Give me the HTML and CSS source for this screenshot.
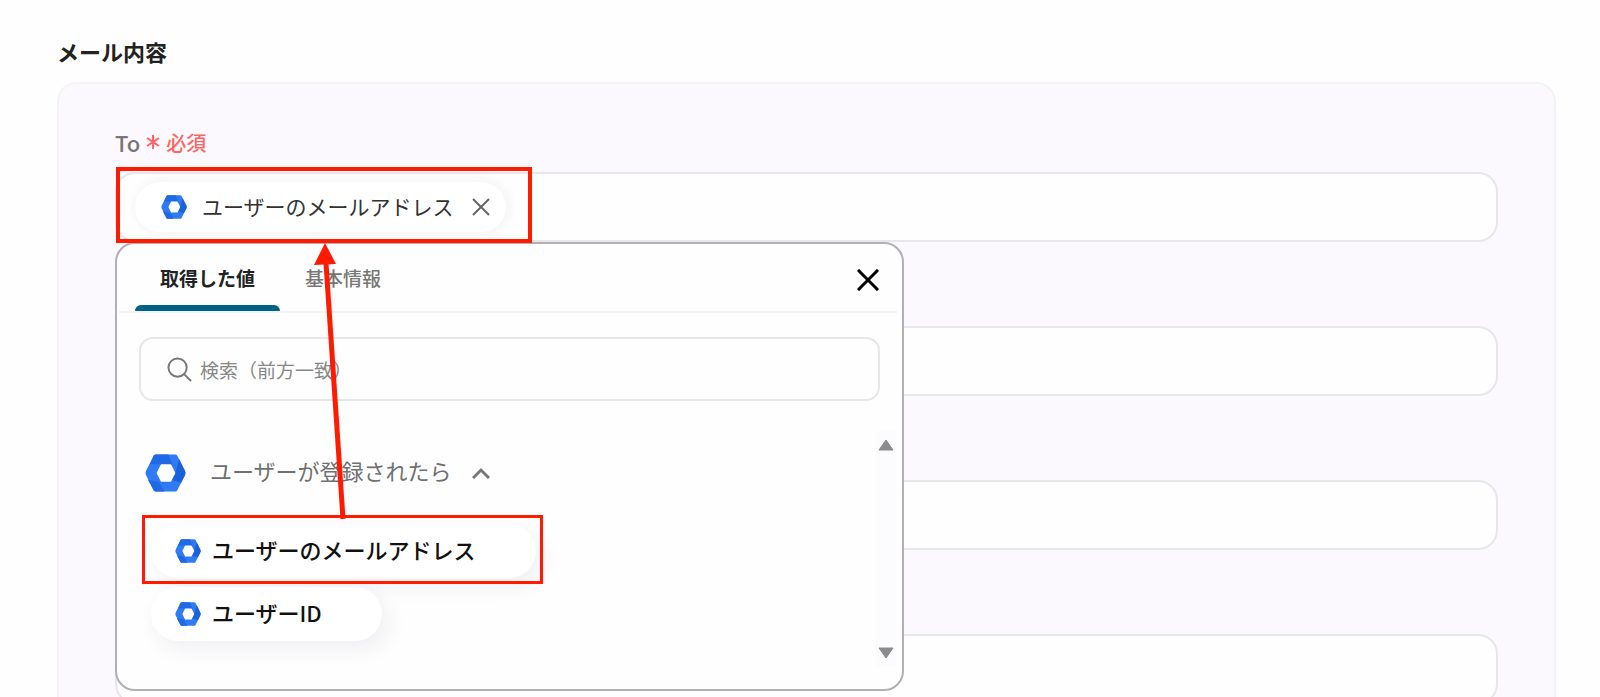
FILE: index.html
```html
<!DOCTYPE html>
<html lang="ja">
<head>
    <meta charset="UTF-8">
    <meta name="viewport" content="width=device-width, initial-scale=1.0">
    <title>メール内容</title>
    <link rel="stylesheet" href="styles.css">
</head>
<body>
    <!-- 共通アイコン -->
    <svg class="defs" width="0" height="0" aria-hidden="true">
        <symbol id="hex" viewBox="0 0 42 38">
            <path fill="#2f7bf6" d="M11 0h20q1 0 2 1l8 16q1 2 0 4l-8 16q-1 1-2 1H11q-1 0-2-1L1 21q-1-2 0-4L9 1q1-1 2-1z"/>
            <path fill="#2068e4" d="M11 0h13l4 10H5l4-9q1-1 2-1z"/>
            <path fill="#1a62dc" d="M35 5l6 12q1 2 0 4l-4 8-10-3 4-7z"/>
            <path fill="#1f69e6" d="M3 26l11 2 6 10h-9q-1 0-2-1z"/>
            <path fill="#fff" stroke="#fff" stroke-width="2" stroke-linejoin="round" d="M17 11h9l4 8-4 8h-9l-4-8z"/>
        </symbol>
    </svg>

    <div class="page">
        <h1 class="title">メール内容</h1>
        <div class="panel">
            <div class="label">
                <label for="to">To</label>
                <svg class="star" viewBox="0 0 14 14" aria-hidden="true"><path d="M7 0v14M1 3l12 8M13 3L1 11"/></svg>
                <span class="required">必須</span>
            </div>
            <div class="field-wrap">
                <div class="field">
                    <span class="chip">
                        <svg class="hex-small"><use href="#hex"/></svg>
                        <span>ユーザーのメールアドレス</span>
                        <button class="chip-close" type="button" aria-label="削除">
                            <svg viewBox="0 0 18 18"><path d="M1 1l16 16M17 1L1 17"/></svg>
                        </button>
                    </span>
                    <input class="field-input" id="to" type="text">
                </div>

                <div class="popup">
                    <div class="tabs">
                        <button class="tab active" type="button">取得した値</button>
                        <button class="tab" type="button">基本情報</button>
                        <button class="popup-close" type="button" aria-label="閉じる">
                            <svg viewBox="0 0 22 22"><path d="M1 1l20 20M21 1L1 21"/></svg>
                        </button>
                    </div>
                    <div class="search">
                        <svg viewBox="0 0 26 26" aria-hidden="true"><circle cx="11" cy="11" r="9.5"/><path d="M18 18l7 7"/></svg>
                        <input type="text" placeholder="検索（前方一致）" aria-label="検索">
                    </div>
                    <div class="result">
                        <div class="list">
                            <button class="group" type="button">
                                <svg class="hex-large"><use href="#hex"/></svg>
                                <span>ユーザーが登録されたら</span>
                                <svg class="chevron" viewBox="0 0 18 12"><path d="M1 11l8-8 8 8"/></svg>
                            </button>
                            <button class="item item-wide" type="button">
                                <svg class="hex-small"><use href="#hex"/></svg>
                                <span>ユーザーのメールアドレス</span>
                            </button>
                            <button class="item" type="button">
                                <svg class="hex-small"><use href="#hex"/></svg>
                                <span>ユーザーID</span>
                            </button>
                        </div>
                        <div class="scroll">
                            <svg viewBox="0 0 16 12"><path d="M8 1l7 10H1z"/></svg>
                            <svg viewBox="0 0 16 12"><path d="M8 11l7-10H1z"/></svg>
                        </div>
                    </div>
                </div>
            </div>
            <input class="field" type="text" aria-label="Cc">
            <input class="field" type="text" aria-label="Bcc">
            <input class="field" type="text" aria-label="件名">
        </div>

        <!-- 説明用の赤枠と矢印 -->
        <div class="mark mark-to"></div>
        <div class="mark mark-item"></div>
        <svg class="arrow" viewBox="0 0 30 276" aria-hidden="true">
            <path class="arrow-line" d="M12 20l17 256"/>
            <path class="arrow-head" d="M11 0l11 21-22 1z"/>
        </svg>
    </div>
</body>
</html>
```
FILE: styles.css
```css
*{
    box-sizing: border-box;
}
body{
    margin: 0;
    background-color: #fefefe;
    font-family: "Noto Sans CJK JP", "Noto Sans", sans-serif;
    color: #222;
}
button,
input{
    font-family: inherit;
    border: none;
    outline: none;
    padding: 0;
    background: none;
}
svg{
    display: block;
    flex: none;
    fill: none;
}
.defs{
    position: absolute;
}
.page{
    position: relative;
    padding: 35px 44px 0 57px;
}
.title{
    margin: 0;
    font-size: 22px;
    line-height: 32px;
    font-weight: 700;
}
.panel{
    display: flex;
    flex-direction: column;
    margin-top: 15px;
    padding: 42px 56px 60px;
    border: 2px solid #f3f2f5;
    border-radius: 20px;
    background-color: #fbf9fd;
}
.label{
    display: flex;
    align-items: center;
    gap: 6px;
    height: 32px;
    margin-bottom: 14px;
    font-size: 20px;
    font-weight: 500;
    color: #777;
}
.label label{
    font-size: 22px;
}
.star{
    width: 14px;
    height: 14px;
    stroke: #ff6460;
    stroke-width: 2;
}
.required{
    color: #ff6460;
}
.field-wrap{
    position: relative;
}
.field{
    display: flex;
    align-items: center;
    width: 100%;
    height: 70px;
    padding: 0 18px;
    border: 2px solid #e7e6ea;
    border-radius: 20px;
    background-color: #fefefe;
}
.panel > .field{
    margin-top: 84px;
}
.field-input{
    flex: 1;
    height: 50px;
    font-size: 20px;
}
.chip{
    display: flex;
    align-items: center;
    height: 50px;
    padding: 0 16px 0 26px;
    border-radius: 25px;
    background-color: #fff;
    box-shadow: 2px 0 12px rgba(60, 40, 90, 0.07);
    font-size: 21px;
    color: #333;
}
.chip span{
    margin: 0 18px 2px 15px;
}
.chip-close svg{
    width: 18px;
    height: 18px;
    stroke: #666;
    stroke-width: 2;
}
.hex-small{
    width: 26px;
    height: 24px;
}
.hex-large{
    width: 41px;
    height: 38px;
}

/* 値の選択ポップアップ */
.popup{
    position: absolute;
    z-index: 1;
    top: 100%;
    left: 0;
    width: 789px;
    height: 449px;
    border: 2px solid #b2b0b4;
    border-radius: 20px;
    background-color: #fefefe;
}
.tabs{
    display: flex;
    height: 69px;
    margin: 0 5px 0 2px;
    padding-left: 16px;
    border-bottom: 2px solid #f3f2f5;
}
.tab{
    height: 67px;
    padding: 6px 25px 0;
    border-bottom: 6px solid transparent;
    font-size: 19px;
    font-weight: 500;
    color: #777;
}
.tab.active{
    position: relative;
    font-weight: 700;
    color: #222;
}
.tab.active::after{
    content: "";
    position: absolute;
    left: 0;
    right: 0;
    bottom: -6px;
    height: 6px;
    border-radius: 6px 6px 0 0;
    background-color: #006385;
}
.popup-close{
    margin: 4px 18px 0 auto;
}
.popup-close svg{
    width: 22px;
    height: 22px;
    stroke: #000;
    stroke-width: 3;
}
.search{
    display: flex;
    align-items: center;
    gap: 8px;
    height: 64px;
    margin: 24px 22px 0;
    padding: 0 26px;
    border: 2px solid #e7e6ea;
    border-radius: 14px;
}
.search svg{
    width: 25px;
    height: 25px;
    stroke: #777;
    stroke-width: 2;
}
.search input{
    flex: 1;
    font-size: 19px;
}
.search input::placeholder{
    color: #888;
}
.result{
    display: flex;
    margin: 30px 6px 0 28px;
}
.list{
    flex: 1;
    display: flex;
    flex-direction: column;
    align-items: flex-start;
}
.group{
    display: flex;
    align-items: center;
    height: 38px;
    margin-top: 23px;
    font-size: 22px;
    font-weight: 400;
    color: #707070;
}
.group span{
    margin: 0 20px 6px 24px;
}
.chevron{
    width: 18px;
    height: 12px;
    stroke: #777;
    stroke-width: 3;
}
.item{
    display: flex;
    align-items: center;
    gap: 11px;
    height: 54px;
    margin: 9px 0 0 6px;
    padding: 0 60px 0 24px;
    border-radius: 27px;
    background-color: #fff;
    box-shadow: 6px 8px 20px rgba(60, 40, 90, 0.07);
    font-size: 22px;
    font-weight: 500;
    color: #111;
}
.item span{
    margin-bottom: 4px;
}
.item-wide{
    margin-top: 32px;
}
.scroll{
    display: flex;
    flex-direction: column;
    justify-content: space-between;
    align-items: center;
    width: 20px;
    height: 236px;
    padding: 8px 0;
    background-color: #fcfbfd;
}
.scroll svg{
    width: 16px;
    height: 12px;
    fill: #8c8a8c;
    stroke: #8c8a8c;
    stroke-linejoin: round;
}

/* 赤枠・矢印 */
.mark{
    position: absolute;
    z-index: 2;
    border: 4px solid #ff1a00;
    pointer-events: none;
}
.mark-to{
    top: 167px;
    left: 116px;
    width: 416px;
    height: 76px;
}
.mark-item{
    top: 515px;
    left: 142px;
    width: 401px;
    height: 69px;
    border-width: 3px;
}
.arrow{
    position: absolute;
    z-index: 2;
    top: 243px;
    left: 314px;
    width: 30px;
    height: 276px;
    overflow: visible;
    pointer-events: none;
}
.arrow-line{
    stroke: #ff1a00;
    stroke-width: 5;
}
.arrow-head{
    fill: #ff1a00;
}
```
